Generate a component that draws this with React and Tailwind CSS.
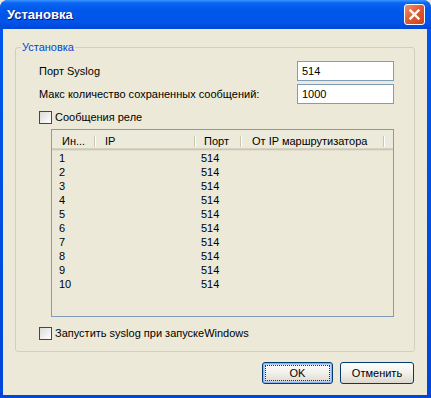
import React from "react";

const rows = [1, 2, 3, 4, 5, 6, 7, 8, 9, 10];

const Checkbox = ({ label }) => (
  <label className="flex h-[13px] items-center gap-[3px]">
    <span className="block h-[13px] w-[13px] border border-[#1c5180] bg-gradient-to-br from-[#dcdcd7] to-white" />
    <span className="leading-[13px]">{label}</span>
  </label>
);

const HeaderCell = ({ width, pad, children }) => (
  <div className={`flex h-full items-center justify-between ${width} ${pad}`}>
    <span className="whitespace-nowrap">{children}</span>
    <span className="flex h-[11px]">
      <span className="w-px bg-[#c7c5b2]" />
      <span className="w-px bg-white" />
    </span>
  </div>
);

const App = () => {
  return (
    <div className="h-[398px] w-[431px] bg-[#ece9d8] font-['Tahoma','Liberation_Sans',sans-serif] text-[11px] text-black">
      <div className="flex h-[398px] w-[431px] flex-col overflow-hidden rounded-t-[8px] bg-gradient-to-b from-[#0058ee] to-[#0046d8]">
        {/* title bar */}
        <div className="flex h-[29px] shrink-0 items-center justify-between bg-[linear-gradient(to_bottom,#3d95ff_0%,#0a66f5_10%,#0057e9_35%,#0055e8_75%,#0047d8_100%)] pl-[7px] pr-[6px]">
          <span className="font-['Trebuchet_MS','Liberation_Sans',sans-serif] text-[13px] font-bold text-white [text-shadow:1px_1px_#0a1883]">
            Установка
          </span>
          <button className="flex h-[21px] w-[21px] items-center justify-center rounded-[3px] border border-white bg-gradient-to-br from-[#ec8f6f] via-[#e0582e] to-[#cc431d]">
            <svg width="11" height="11" viewBox="0 0 11 11">
              <path d="M1.5 1.5 L9.5 9.5 M9.5 1.5 L1.5 9.5" stroke="white" strokeWidth="2.4" strokeLinecap="square" />
            </svg>
          </button>
        </div>

        {/* body */}
        <div className="mb-[3px] ml-[3px] mr-[4px] flex flex-1 flex-col bg-[#ece9d8] pl-[12px] pt-[12px]">
          <fieldset className="h-[311px] w-[399px] rounded-[3px] border border-[#d0d0bf] pl-[23px] pr-[20px]">
            <legend className="-ml-[18px] px-[1px] leading-[13px] text-[#0046d5]">Установка</legend>

            <div className="mt-[7px] flex h-[20px] items-center justify-between">
              <span>Порт Syslog</span>
              <div className="flex h-[20px] w-[97px] items-center border border-[#7f9db9] bg-white pl-[4px]">514</div>
            </div>
            <div className="mt-[3px] flex h-[20px] items-center justify-between">
              <span>Макс количество сохраненных сообщений:</span>
              <div className="flex h-[20px] w-[97px] items-center border border-[#7f9db9] bg-white pl-[4px]">1000</div>
            </div>

            <div className="mt-[7px]">
              <Checkbox label="Сообщения реле" />
            </div>

            {/* list view */}
            <div className="ml-[12px] mt-[5px] h-[188px] w-[343px] border border-[#7f9db9] bg-[#ece9d8]">
              <div className="flex h-[21px] bg-[#ebeadb] pb-[2px] pt-[4px] shadow-[inset_0_-1px_#e2decd,inset_0_-2px_#cbc7b8,inset_0_-3px_#d6d2c2]">
                <HeaderCell width="w-[44px]" pad="pl-[10px]">Ин...</HeaderCell>
                <HeaderCell width="w-[100px]" pad="pl-[9px]">IP</HeaderCell>
                <HeaderCell width="w-[46px]" pad="pl-[8px]">Порт</HeaderCell>
                <HeaderCell width="w-[143px]" pad="pl-[10px]">От IP маршрутизатора</HeaderCell>
              </div>
              {rows.map((n) => (
                <div key={n} className="flex h-[14px] items-center leading-[14px]">
                  <span className="w-[44px] pl-[7px]">{n}</span>
                  <span className="w-[100px]" />
                  <span className="w-[46px] pl-[5px]">514</span>
                </div>
              ))}
            </div>

            <div className="mt-[10px]">
              <Checkbox label="Запустить syslog при запускеWindows" />
            </div>
          </fieldset>

          <div className="mt-[10px] flex w-[399px] justify-end gap-[7px]">
            <button className="relative h-[22px] w-[71px] rounded-[3px] border border-[#003c74] bg-gradient-to-b from-white via-[#f1f0ea] to-[#dcd8cd] shadow-[inset_0_0_0_1px_#8cb4f2,inset_0_0_0_2px_#b9d1fa]">
              <span className="pointer-events-none absolute inset-[2px] border border-dotted border-[#333]" />
              OK
            </button>
            <button className="h-[22px] w-[74px] rounded-[3px] border border-[#003c74] bg-gradient-to-b from-white via-[#f1f0ea] to-[#dcd8cd]">
              Отменить
            </button>
          </div>
        </div>
      </div>
    </div>
  );
};

export default App;
